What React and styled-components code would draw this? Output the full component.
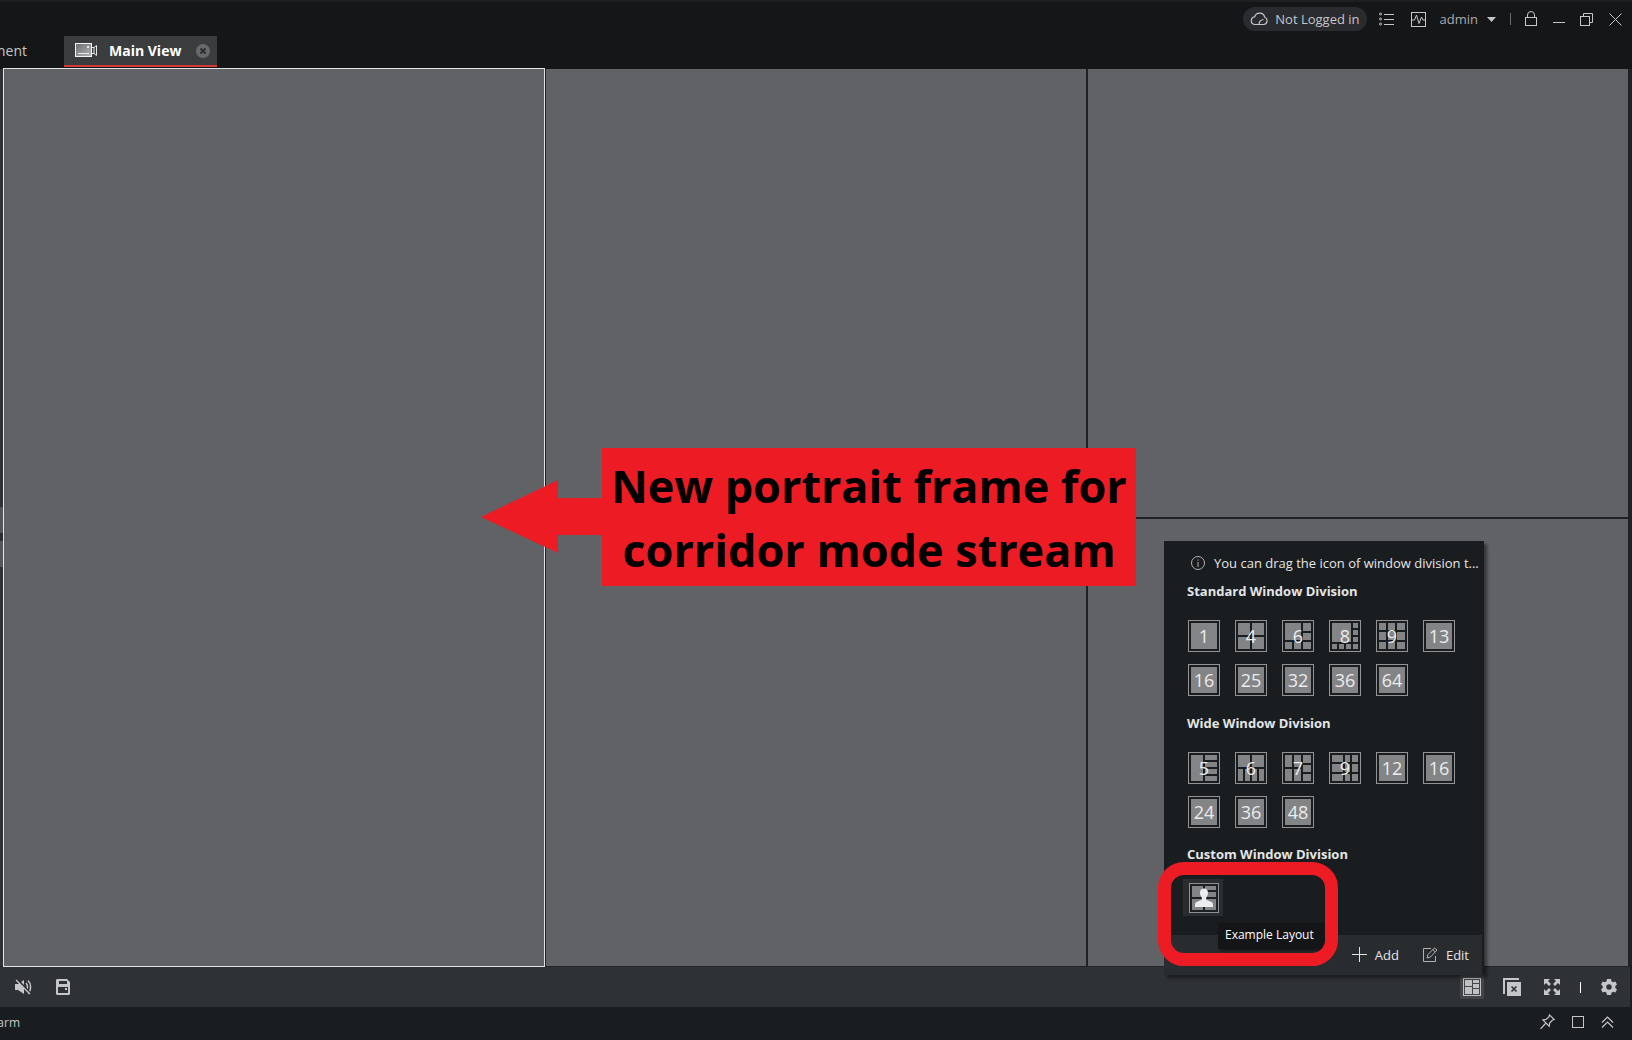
import * as React from 'react'
import styled, { createGlobalStyle, css } from 'styled-components'

const GlobalStyle = createGlobalStyle`
    * {
        box-sizing: border-box;
    }

    body {
        margin: 0;
        background: #151618;
        font-family: 'Open Sans', 'Noto Sans', sans-serif;
        font-size: 13px;
        color: #c4c6c8;
    }

    button {
        margin: 0;
        padding: 0;
        border: 0;
        background: none;
        color: inherit;
        font: inherit;
    }

    svg {
        display: block;
        flex: none;
    }
`

const Page = styled.div`
    position: relative;
    display: flex;
    flex-direction: column;
    height: 100vh;
    overflow: hidden;
`

const Header = styled.header`
    display: flex;
    justify-content: space-between;
    height: 68px;
    border-top: 2px solid #1d2022;
    background: #151618;
`

const Tabs = styled.nav`
    display: flex;
    align-items: flex-end;
    gap: 37px;
    padding-bottom: 1px;
`

const ClippedTab = styled.button`
    display: flex;
    justify-content: flex-end;
    align-items: center;
    width: 27px;
    height: 34px;
    overflow: hidden;
    font-size: 14px;
`

const ActiveTab = styled.div`
    display: flex;
    align-items: center;
    width: 153px;
    height: 31px;
    padding: 0 7px 0 11px;
    border-bottom: 2px solid #d63a3a;
    background: #3b3c3e;
`

const TabLabel = styled.button`
    display: flex;
    flex: 1;
    align-items: center;
    gap: 11px;
    font-size: 14px;
    font-weight: bold;
    line-height: 20px;
    white-space: nowrap;
    color: #fff;
`

const Tools = styled.div`
    display: flex;
    align-items: center;
    height: 34px;
    padding-right: 10px;
`

const LoginPill = styled.button`
    display: flex;
    align-items: center;
    gap: 7px;
    height: 24px;
    margin-right: 12px;
    padding: 0 7px;
    border-radius: 12px;
    background: #2a2b2f;
    white-space: nowrap;
`

const ToolButton = styled.button`
    display: flex;
    align-items: center;
    gap: 9px;
    margin-left: ${(props) => props.$gap || 0}px;
    color: #c4c6c8;
`

const UserName = styled.span`
    color: #a9abad;
`

const Divider = styled.span`
    width: 1px;
    height: 12px;
    margin-left: 14px;
    background: #6a6c6e;
`

const Stage = styled.main`
    display: grid;
    flex: 1;
    grid-template-columns: repeat(3, 1fr);
    grid-template-rows: 1fr 1fr;
    gap: 2px;
    min-height: 0;
    margin-top: 1px;
    padding-right: 4px;
    padding-left: 4px;
    background: linear-gradient(to right, #2e3135 4px, #202124 4px);
`

const Frame = styled.section`
    background: #616266;
    ${(props) => props.$tall && css`
        grid-row: span 2;
    `}
    ${(props) => props.$selected && css`
        z-index: 1;
        box-shadow: 0 0 0 1px #e2e2e2;
    `}
`

const SideHandle = styled.button`
    position: absolute;
    top: 507px;
    left: 0;
    width: 3px;
    height: 60px;
    background: linear-gradient(#54565a 26px, #2a2c2f 26px, #2a2c2f 34px, #54565a 34px);
`

const Toolbar = styled.div`
    display: flex;
    align-items: center;
    height: 41px;
    padding: 0 13px 0 15px;
    border-top: 1px solid #202224;
    border-right: 2px solid #1c1e21;
    background: #2e3135;
    color: #c0c1c3;
`

const Group = styled.div`
    display: flex;
    align-items: center;
    gap: ${(props) => props.$gap}px;
    ${(props) => props.$end && 'margin-left: auto;'}
`

const ToolbarDivider = styled.span`
    width: 1px;
    height: 11px;
    background: #fff;
`

const ActiveIcon = styled.button`
    display: grid;
    place-items: center;
    width: 24px;
    height: 24px;
    background: #434649;
`

const StatusBar = styled.footer`
    display: flex;
    align-items: center;
    height: 33px;
    padding: 0 18px 3px 0;
    background: #1a1d20;
    color: #c4c6c8;
`

const StatusLabel = styled.span`
    display: flex;
    justify-content: flex-end;
    width: 20px;
    overflow: hidden;
    font-size: 12px;
`

const Panel = styled.aside`
    position: absolute;
    z-index: 2;
    right: 148px;
    bottom: 65px;
    display: flex;
    flex-direction: column;
    width: 320px;
    background: #1a1d1f;
    box-shadow: 3px 3px 3px rgba(0, 0, 0, 0.45);
    color: #e4e5e6;
`

const Hint = styled.p`
    display: flex;
    align-items: center;
    gap: 9px;
    margin: 0;
    padding: 13px 0 0 27px;
    line-height: 18px;
    white-space: nowrap;
`

const Section = styled.section`
    padding: 0 23px;
`

const SectionTitle = styled.h2`
    margin: 0;
    padding-top: ${(props) => props.$top}px;
    font-size: 13px;
    font-weight: bold;
    line-height: 18px;
`

const Tiles = styled.div`
    display: grid;
    grid-template-columns: repeat(6, 32px);
    gap: 12px 15px;
    padding: 20px 1px 0;
`

const Tile = styled.button`
    display: grid;
    place-items: center;
    width: 32px;
    height: 32px;
    border: 1px solid #929395;
    font-size: 18px;
    line-height: 24px;
    color: #ececec;

    svg, span {
        grid-area: 1 / 1;
    }
`

const CustomArea = styled.div`
    height: 72px;
    padding: 16px 19px 0;
`

const CustomTile = styled.button`
    display: grid;
    place-items: center;
    width: 40px;
    height: 37px;
    padding-left: 2px;
    background: #2a2d30;
`

const PanelFooter = styled.div`
    display: flex;
    justify-content: flex-end;
    align-items: center;
    gap: 24px;
    height: 40px;
    margin-right: 2px;
    padding: 0 13px 1px 0;
    background: #292c2f;
`

const FooterButton = styled.button`
    display: flex;
    align-items: center;
    gap: 8px;
`

const Tooltip = styled.div`
    position: absolute;
    bottom: 26px;
    left: 54px;
    padding: 4px 12px 6px 7px;
    background: #141517;
    box-shadow: 2px 2px 3px rgba(0, 0, 0, 0.5);
    font-size: 12px;
    line-height: 16px;
    white-space: nowrap;
    color: #fff;
`

const Ring = styled.div`
    position: absolute;
    bottom: 9px;
    left: -6px;
    width: 180px;
    height: 104px;
    border: 13px solid #ed1c24;
    border-radius: 26px;
`

const Callout = styled.div`
    position: absolute;
    z-index: 2;
    top: 448px;
    left: 481px;
    display: flex;
    align-items: center;
`

const CalloutText = styled.strong`
    width: 534px;
    padding: 6px 0 4px;
    background: #ed1c24;
    font-size: 45px;
    font-weight: bold;
    line-height: 64px;
    text-align: center;
    white-space: nowrap;
    color: #000;
`

// each pane is [x, y, width, height] inside a 26px square
const full = [[0, 0, 26, 26]]

const cross = (cols, rows) => cols.flatMap(([x, w]) => rows.map(([y, h]) => [x, y, w, h]))

const halves = [[0, 12], [14, 12]]
const thirds = [[0, 8], [10, 7], [19, 7]]
const quarters = [[0, 5], [7, 5], [14, 5], [21, 5]]

const standard = [
    { count: 1, panes: full },
    { count: 4, panes: cross(halves, halves) },
    { count: 6, panes: [[0, 0, 16, 17], ...cross([[18, 8]], thirds), [0, 19, 7, 7], [9, 19, 7, 7]] },
    { count: 8, panes: [[0, 0, 19, 19], ...cross([[21, 5]], quarters), [0, 21, 5, 5], [7, 21, 5, 5], [14, 21, 5, 5]] },
    { count: 9, panes: cross([[0, 7], [9, 7], [18, 8]], [[0, 7], [9, 8], [19, 7]]) },
    { count: 13, panes: full },
    { count: 16, panes: full },
    { count: 25, panes: full },
    { count: 32, panes: full },
    { count: 36, panes: full },
    { count: 64, panes: full },
]

const wide = [
    { count: 5, panes: [[0, 0, 12, 26], ...cross([[14, 12]], quarters)] },
    { count: 6, panes: [...cross(halves, [[0, 12]]), ...cross(quarters, [[14, 12]])] },
    { count: 7, panes: [...cross([[0, 7], [9, 7]], halves), ...cross([[18, 8]], thirds)] },
    { count: 9, panes: cross([[0, 11], [13, 5], [20, 6]], [[0, 7], [9, 8], [19, 7]]) },
    { count: 12, panes: full },
    { count: 16, panes: full },
    { count: 24, panes: full },
    { count: 36, panes: full },
    { count: 48, panes: full },
]

function Line({ w = 16, h = 16, children, ...rest }) {
    return (
        <svg width={w} height={h} viewBox={`0 0 ${w} ${h}`} fill="none" stroke="currentColor" aria-hidden="true" {...rest}>
            {children}
        </svg>
    )
}

function Solid({ w = 16, h = 16, children }) {
    return (
        <svg width={w} height={h} viewBox={`0 0 ${w} ${h}`} fill="currentColor" aria-hidden="true">
            {children}
        </svg>
    )
}

function DivisionTiles({ items }) {
    return (
        <Tiles>
            {items.map(({ count, panes }) => (
                <Tile key={count}>
                    <svg width="26" height="26" fill="#838486" aria-hidden="true">
                        {panes.map(([x, y, w, h]) => <rect key={`${x}-${y}`} x={x} y={y} width={w} height={h} />)}
                    </svg>
                    <span>{count}</span>
                </Tile>
            ))}
        </Tiles>
    )
}

function TopBar() {
    return (
        <Header>
            <Tabs>
                <ClippedTab>ment</ClippedTab>
                <ActiveTab>
                    <TabLabel>
                        <svg width="23" height="15" viewBox="0 0 23 15" aria-hidden="true">
                            <defs>
                                <linearGradient id="camera" x1="0" y1="0" x2="1" y2="1">
                                    <stop offset="0" stopColor="#6b6c6e" />
                                    <stop offset="1" stopColor="#b4b5b6" />
                                </linearGradient>
                            </defs>
                            <rect x="0.5" y="0.5" width="16" height="13" fill="url(#camera)" stroke="#f4f4f4" />
                            <path d="M3 10.5h11" stroke="#e8e8e8" />
                            <circle cx="13" cy="4" r="1" fill="#fff" />
                            <path d="M17 4.500h2v6h-2M19 4.500l2.500-2v10l-2.500-2" fill="none" stroke="#e8e8e8" />
                        </svg>
                        Main View
                    </TabLabel>
                    <button aria-label="Close tab">
                        <svg width="14" height="14" viewBox="0 0 14 14" aria-hidden="true">
                            <circle cx="7" cy="7" r="7" fill="#68696b" />
                            <path d="M4.500 4.500l5 5M9.500 4.500l-5 5" stroke="#2d2e30" strokeWidth="2" />
                        </svg>
                    </button>
                </ActiveTab>
            </Tabs>

            <Tools>
                <LoginPill>
                    <Line w={18} h={14}>
                        <path d="M4.500 12.500h9a3.800 3.800 0 0 0 1.200-7.300A5.200 5.200 0 0 0 4.700 4.800A3.900 3.900 0 0 0 4.500 12.500z" strokeWidth="1.200" />
                        <path d="M9 12.500c0-3 1.500-4.500 4.500-5" strokeWidth="1.200" />
                    </Line>
                    Not Logged in
                </LoginPill>
                <ToolButton aria-label="Menu list">
                    <Line w={15} h={14}>
                        <circle cx="1.500" cy="2" r="1" />
                        <circle cx="1.500" cy="7" r="1" />
                        <circle cx="1.500" cy="12" r="1" />
                        <path d="M5 2.500h10M5 7.500h10M5 12.500h10" />
                    </Line>
                </ToolButton>
                <ToolButton $gap={17} aria-label="System status">
                    <Line w={15} h={15}>
                        <rect x="0.500" y="0.500" width="14" height="14" />
                        <path d="M1 8h2.500L5.500 3l2.500 8.500L10.500 5l1.500 3h2" />
                    </Line>
                </ToolButton>
                <ToolButton $gap={14}>
                    <UserName>admin</UserName>
                    <Solid w={9} h={5}><path d="M0 0h9L4.500 5z" /></Solid>
                </ToolButton>
                <Divider />
                <ToolButton $gap={14} aria-label="Lock">
                    <Line w={12} h={16}>
                        <rect x="0.500" y="6.500" width="11" height="8" />
                        <path d="M2.500 6.500V4a3.500 3.500 0 0 1 7 0v2.500" />
                    </Line>
                </ToolButton>
                <ToolButton $gap={16} aria-label="Minimize">
                    <Line w={12} h={14}><path d="M0 10.500h12" /></Line>
                </ToolButton>
                <ToolButton $gap={15} aria-label="Restore">
                    <Line w={13} h={13}>
                        <rect x="0.500" y="3.500" width="9" height="9" />
                        <path d="M3.500 3.500v-3h9v9h-3" />
                    </Line>
                </ToolButton>
                <ToolButton $gap={16} aria-label="Close">
                    <Line w={13} h={13}><path d="M0.500 0.500l12 12M12.500 0.500l-12 12" /></Line>
                </ToolButton>
            </Tools>
        </Header>
    )
}

function DivisionPanel() {
    return (
        <Panel>
            <Hint>
                <Line w={14} h={14} stroke="#b0b1b3">
                    <circle cx="7" cy="7" r="6.500" />
                    <path d="M7 6v5M7 3.500v1.200" />
                </Line>
                You can drag the icon of window division t...
            </Hint>
            <Section>
                <SectionTitle $top={10}>Standard Window Division</SectionTitle>
                <DivisionTiles items={standard} />
            </Section>
            <Section>
                <SectionTitle $top={18}>Wide Window Division</SectionTitle>
                <DivisionTiles items={wide} />
            </Section>
            <Section>
                <SectionTitle $top={17}>Custom Window Division</SectionTitle>
            </Section>
            <CustomArea>
                <CustomTile aria-label="Example Layout">
                    <svg width="30" height="30" viewBox="0 0 30 30" aria-hidden="true">
                        <rect x="0.500" y="0.500" width="29" height="29" fill="#1d2022" stroke="#8e8f91" />
                        <path d="M3 3h11v11H3zM16 3h11v4H16zM16 9h11v5H16zM3 16h11v11H3zM16 16h11v11H16z" fill="#838486" />
                        <path d="M15 5.500c2.700 0 4 1.800 4 4.300 0 2.200-.9 3.700-1.800 4.600v2.400c2 1.200 6.800 1.700 6.800 4.700v2.500H6v-2.500c0-3 4.800-3.500 6.800-4.700v-2.400C11.900 13.500 11 12 11 9.800c0-2.500 1.300-4.300 4-4.300z" fill="#ededee" />
                    </svg>
                </CustomTile>
            </CustomArea>
            <PanelFooter>
                <FooterButton>
                    <Line w={15} h={15}><path d="M7.500 0v15M0 7.500h15" /></Line>
                    Add
                </FooterButton>
                <FooterButton>
                    <Line w={15} h={15} stroke="#b0b1b3">
                        <path d="M8 1.500H0.500v13h12V9" />
                        <path d="M4 11l1-3.500L11.500 1l2.500 2-6.500 7zM9.800 2.800l2.400 2" />
                    </Line>
                    Edit
                </FooterButton>
            </PanelFooter>
            <Tooltip role="tooltip">Example Layout</Tooltip>
            <Ring />
        </Panel>
    )
}

function BottomBar() {
    return (
        <Toolbar>
            <Group $gap={24}>
                <ToolButton aria-label="Mute">
                    <Solid w={17} h={16}>
                        <path d="M0 5h3l6-4v14l-6-4H0z" />
                        <path d="M11 4c2 2 2 6 0 8M13 1.500c3.500 3.500 3.500 9.500 0 13" fill="none" stroke="currentColor" strokeWidth="1.500" />
                        <path d="M2 0l14 15" stroke="#2e3135" strokeWidth="2" />
                        <path d="M1 1l14 14" stroke="currentColor" strokeWidth="1.300" />
                    </Solid>
                </ToolButton>
                <ToolButton aria-label="Save">
                    <Solid w={14} h={16}>
                        <path fillRule="evenodd" d="M1 0h10l3 3v12l-1 1H1l-1-1V1zM3 2v3h8V2zM2 8v6h10V8zM9 9h2v2H9z" />
                    </Solid>
                </ToolButton>
            </Group>
            <Group $gap={19} $end>
                <ActiveIcon aria-label="Window division">
                    <Solid w={18} h={18}>
                        <path fillRule="evenodd" d="M0 0h18v18H0zM1 1v16h16V1z" />
                        <path d="M2 2h7v6H2zM10 2h6v3h-6zM10 6h6v4h-6zM2 9h7v7H2zM10 11h6v5h-6z" />
                    </Solid>
                </ActiveIcon>
                <ToolButton aria-label="Close all windows">
                    <Solid w={18} h={18}>
                        <path d="M0 0h16v2H2v14H0z" />
                        <path d="M4 4h14v14H4z" />
                        <path d="M8.500 8.500l5 5M13.500 8.500l-5 5" stroke="#2e3135" strokeWidth="1.600" />
                    </Solid>
                </ToolButton>
                <Group $gap={20}>
                    <ToolButton $gap={4} aria-label="Full screen">
                        <Solid>
                            <path d="M0 0h6L4 2l3 3-2 2-3-3-2 2zM16 0v6l-2-2-3 3-2-2 3-3-2-2zM0 16v-6l2 2 3-3 2 2-3 3 2 2zM16 16h-6l2-2-3-3 2-2 3 3 2-2z" />
                        </Solid>
                    </ToolButton>
                    <ToolbarDivider />
                    <ToolButton aria-label="Settings">
                        <Solid>
                            <path fillRule="evenodd" d="M6 0h4l.5 2.300 1.500.9 2.300-.8 1.700 3.200L14.300 7v2l1.700 1.400-1.700 3.200-2.300-.8-1.500.9L10 16H6l-.5-2.300-1.500-.9-2.300.8L0 10.400 1.700 9V7L0 5.600l1.700-3.200 2.300.8 1.500-.9zM8 5.300a2.700 2.700 0 1 0 0 5.400 2.700 2.700 0 0 0 0-5.400z" />
                        </Solid>
                    </ToolButton>
                </Group>
            </Group>
        </Toolbar>
    )
}

export default function App() {
    return (
        <Page>
            <GlobalStyle />
            <TopBar />
            <Stage>
                <Frame $tall $selected />
                <Frame $tall />
                <Frame />
                <Frame />
            </Stage>
            <BottomBar />
            <StatusBar>
                <StatusLabel>arm</StatusLabel>
                <Group $gap={17} $end>
                    <ToolButton aria-label="Pin">
                        <Line w={15} h={16}>
                            <path d="M9.500 0.800l4.800 4.800-1.800.4-2.800 3-.5 3.200-6.300-6.300 3.200-.5 3-2.800zM5.500 9.500L0.500 14.800" strokeWidth="1.200" />
                        </Line>
                    </ToolButton>
                    <ToolButton aria-label="Maximize">
                        <Line w={12} h={12}><rect x="0.500" y="0.500" width="11" height="11" /></Line>
                    </ToolButton>
                    <ToolButton aria-label="Expand">
                        <Line w={13} h={12} strokeWidth="1.200"><path d="M1 6.500l5.500-5.500L12 6.500M1 11.500l5.500-5.500 5.500 5.500" /></Line>
                    </ToolButton>
                </Group>
            </StatusBar>

            <SideHandle aria-label="Show side panel" />
            <DivisionPanel />

            <Callout>
                <svg width="121" height="76" viewBox="0 0 121 76" fill="#ed1c24" aria-hidden="true">
                    <path d="M0 38L77 1v18h44v37H77v18z" />
                </svg>
                <CalloutText>
                    New portrait frame for
                    <br />
                    corridor mode stream
                </CalloutText>
            </Callout>
        </Page>
    )
}
